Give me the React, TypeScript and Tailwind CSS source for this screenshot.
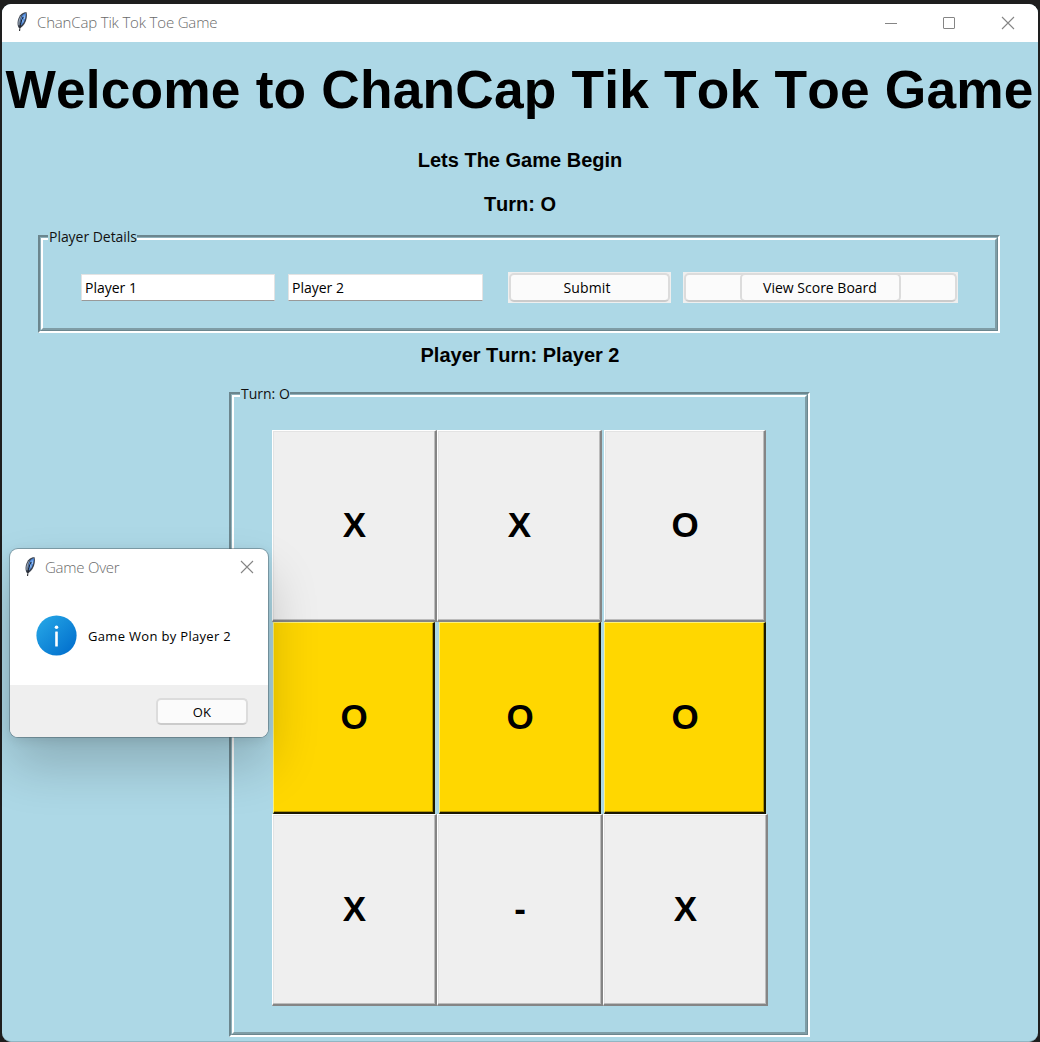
import type { ReactNode } from "react";

const ui = "font-['Open_Sans','Noto_Sans',sans-serif]";
const heading = "font-['Liberation_Sans',Arial,sans-serif] font-bold [font-kerning:none] whitespace-nowrap";

function Feather() {
  return (
    <svg width="14" height="22" viewBox="0 0 14 22" className="block shrink-0">
      <path d="M3.400 16.500C1.600 12.500 2.700 6.300 6.400 3 8 1.600 10.300 1 11.600 1.300c.9 3.200.1 8.200-2 11.500-1.300 2-3.200 3.800-4.600 4.200z" fill="#3b4350" />
      <path d="M7.600 4C8.900 2.800 10.200 2.200 10.900 2.200c.3 2.600-.6 6.400-2.100 8.900C7.900 12.700 6.500 14.400 5.300 15 4.700 11 5.700 6.700 7.600 4z" fill="#4f8add" />
      <path d="M3.400 14C2.900 10.200 4.200 6.500 6.700 4.100 5.300 7.300 4.600 10.500 4.500 14.600z" fill="#93a1b2" />
      <path d="M8.200 6C6.400 9.500 5.100 13 4.600 20" fill="none" stroke="#15181d" strokeWidth="1" />
      <path d="M9.200 4.500 9.500 8M7.700 8.500 8 11.500" stroke="#b5d4f6" strokeWidth=".8" />
    </svg>
  );
}

function Cross({ className }: { className: string }) {
  return (
    <svg width="14" height="14" viewBox="0 0 14 14" className={className}>
      <path d="M1 1 13 13M13 1 1 13" stroke="#858585" strokeWidth="1.100" />
    </svg>
  );
}

function Groove({ label, className, labelClass, children }: { label: string; className: string; labelClass: string; children: ReactNode }) {
  return (
    <div className={`relative border-t-[2px] border-l-[2px] border-r-[2px] border-b-[2px] border-t-[#6b868e] border-l-[#6b868e] border-r-white border-b-white ${className}`}>
      <div className="h-full border-t border-l border-r border-b border-t-[#90b1bb] border-l-[#90b1bb] border-r-[#6b868e] border-b-[#6b868e]">
        <div className="h-full border-t-[2px] border-l-[2px] border-r-[2px] border-b-[2px] border-t-white border-l-white border-r-[#7f9da6] border-b-[#7f9da6]">
          {children}
        </div>
      </div>
      <span className={`absolute -top-[10px] bg-[#add8e6] pl-px text-[14px] leading-[20px] whitespace-nowrap text-[#111] ${ui} ${labelClass}`}>{label}</span>
    </div>
  );
}

function Entry({ value, className }: { value: string; className: string }) {
  return (
    <div className={`h-[27px] border border-[#e3e3e3] border-b-[#999] bg-white pl-[3px] text-[14px] leading-[25px] text-black ${ui} ${className}`}>
      {value}
    </div>
  );
}

const face = "rounded-[5px] border-[2px] border-[#dcdcdc] border-b-[#cbcbcb] bg-[#fbfbfb]";

type CellProps = { mark: string; width: string; win?: boolean };

function Cell({ mark, width, win }: CellProps) {
  const tone = win
    ? "bg-[#ffd700] border-t-[#fff27a] border-l-[#fff27a] border-r-[#1c1800] border-b-[#1c1800] shadow-[inset_-1px_-1px_0_#b39700]"
    : "bg-[#efefef] border-t-white border-l-white border-r-[#858585] border-b-[#858585] shadow-[inset_-1px_-1px_0_#bcbcbc,inset_1px_1px_0_#e3e3e3]";
  return (
    <div className={`flex h-[192px] items-center justify-center border-t border-l border-r-2 border-b-2 pb-[2px] pl-px text-[35px] leading-none text-black ${heading} ${tone} ${width}`}>
      {mark}
    </div>
  );
}

export default function App() {
  return (
    <div className="relative h-[1042px] w-[1040px] overflow-hidden bg-[#1e1e1e] pt-1 pr-[2px] pl-[2px]">
      <div className="flex h-[1038px] flex-col items-center overflow-hidden rounded-[9px] border-b border-[#91b6c3] bg-[#add8e6] text-black">
        <div className="flex h-[38px] w-full shrink-0 items-center bg-white">
          <div className="ml-[13px] -mt-[2px]"><Feather /></div>
          <span className={`-mt-[2px] ml-[8px] text-[15px] leading-[20px] font-light tracking-[-0.17px] text-[#6a6a6a] ${ui}`}>ChanCap Tik Tok Toe Game</span>
          <div className="mr-[23px] ml-auto flex items-center">
            <div className="mr-[46px] h-px w-[12px] bg-[#858585]" />
            <div className="mr-[46px] h-[12px] w-[12px] rounded-[1px] border border-[#858585]" />
            <Cross className="block" />
          </div>
        </div>

        <h1 className={`mt-[17px] mr-px h-[62px] text-[53.33px] leading-[62px] tracking-[0.17px] ${heading}`}>Welcome to ChanCap Tik Tok Toe Game</h1>
        <p className={`mt-[27px] text-[20px] leading-[24px] ${heading}`}>Lets The Game Begin</p>
        <p className={`mt-[20px] text-[20px] leading-[24px] ${heading}`}>Turn: O</p>

        <Groove label="Player Details" className="mt-[19px] ml-[-2px] h-[98px] w-[962px]" labelClass="left-[8px] tracking-[-0.04px]">
          <div className="flex pt-[32px] pl-[38px]">
            <Entry value="Player 1" className="mt-[2px] w-[194px]" />
            <Entry value="Player 2" className="mt-[2px] ml-[13px] w-[195px]" />
            <div className="ml-[25px] h-[31px] w-[163px] bg-[#efefef] p-px">
              <div className={`h-full pr-[5px] text-center text-[14px] leading-[26px] tracking-[0.15px] ${face} ${ui}`}>Submit</div>
            </div>
            <div className="ml-[12px] h-[31px] w-[275px] bg-[#efefef] p-px">
              <div className={`flex h-full justify-center ${face}`}>
                <div className={`-mt-[2px] h-[29px] w-[161px] pr-px text-center text-[14px] leading-[26px] ${face} ${ui}`}>View Score Board</div>
              </div>
            </div>
          </div>
        </Groove>

        <p className={`mt-[10px] text-[20px] leading-[24px] ${heading}`}>Player Turn: Player 2</p>

        <Groove label="Turn: O" className="mt-[25px] mr-px h-[645px] w-[581px]" labelClass="left-[9px]">
          <div className="flex flex-col pt-[33px] pl-[38px]">
            <div className="flex">
              <Cell mark="X" width="w-[165px]" />
              <Cell mark="X" width="w-[165px]" />
              <Cell mark="O" width="w-[162px] ml-[2px]" />
            </div>
            <div className="flex pl-px">
              <Cell mark="O" width="w-[162px]" win />
              <Cell mark="O" width="w-[162px] ml-[4px]" win />
              <Cell mark="O" width="w-[162px] ml-[3px]" win />
            </div>
            <div className="flex">
              <Cell mark="X" width="w-[165px]" />
              <Cell mark="-" width="w-[166px]" />
              <Cell mark="X" width="w-[165px]" />
            </div>
          </div>
        </Groove>
      </div>

      <div className="absolute top-[549px] left-[10px] h-[188px] w-[258px] rounded-[8px] bg-white shadow-[0_0_0_1px_rgba(70,90,100,0.45),0_28px_52px_rgba(0,0,0,0.2),0_3px_12px_rgba(0,0,0,0.1)]">
        <div className="flex h-[136px] flex-col">
          <div className="flex h-[36px] items-center pl-[13px]">
            <Feather />
            <span className={`ml-[8px] text-[15px] leading-[20px] font-light tracking-[-0.24px] text-[#6a6a6a] ${ui}`}>Game Over</span>
            <Cross className="mr-[14px] ml-auto block" />
          </div>
          <div className="flex items-center pt-[30px] pl-[26px]">
            <svg width="41" height="41" viewBox="0 0 41 41" className="block">
              <defs>
                <linearGradient id="info" x1="0" y1="0" x2="1" y2="1">
                  <stop offset=".1" stopColor="#24a4e5" />
                  <stop offset=".95" stopColor="#006dcc" />
                </linearGradient>
              </defs>
              <circle cx="20.500" cy="20.500" r="20.100" fill="url(#info)" />
              <circle cx="20.500" cy="12.300" r="1.800" fill="#fff" />
              <rect x="19.200" y="16.500" width="2.600" height="15" rx=".5" fill="#fff" />
            </svg>
            <span className={`mt-px ml-[11px] text-[13px] leading-[20px] tracking-[0.32px] whitespace-nowrap text-black ${ui}`}>Game Won by Player 2</span>
          </div>
        </div>
        <div className="flex h-[52px] justify-end rounded-b-[8px] bg-[#efefef] pt-[13px] pr-[20px]">
          <div className={`h-[27px] w-[92px] text-center text-[13px] leading-[24px] tracking-[0.3px] ${face} ${ui}`}>OK</div>
        </div>
      </div>
    </div>
  );
}
